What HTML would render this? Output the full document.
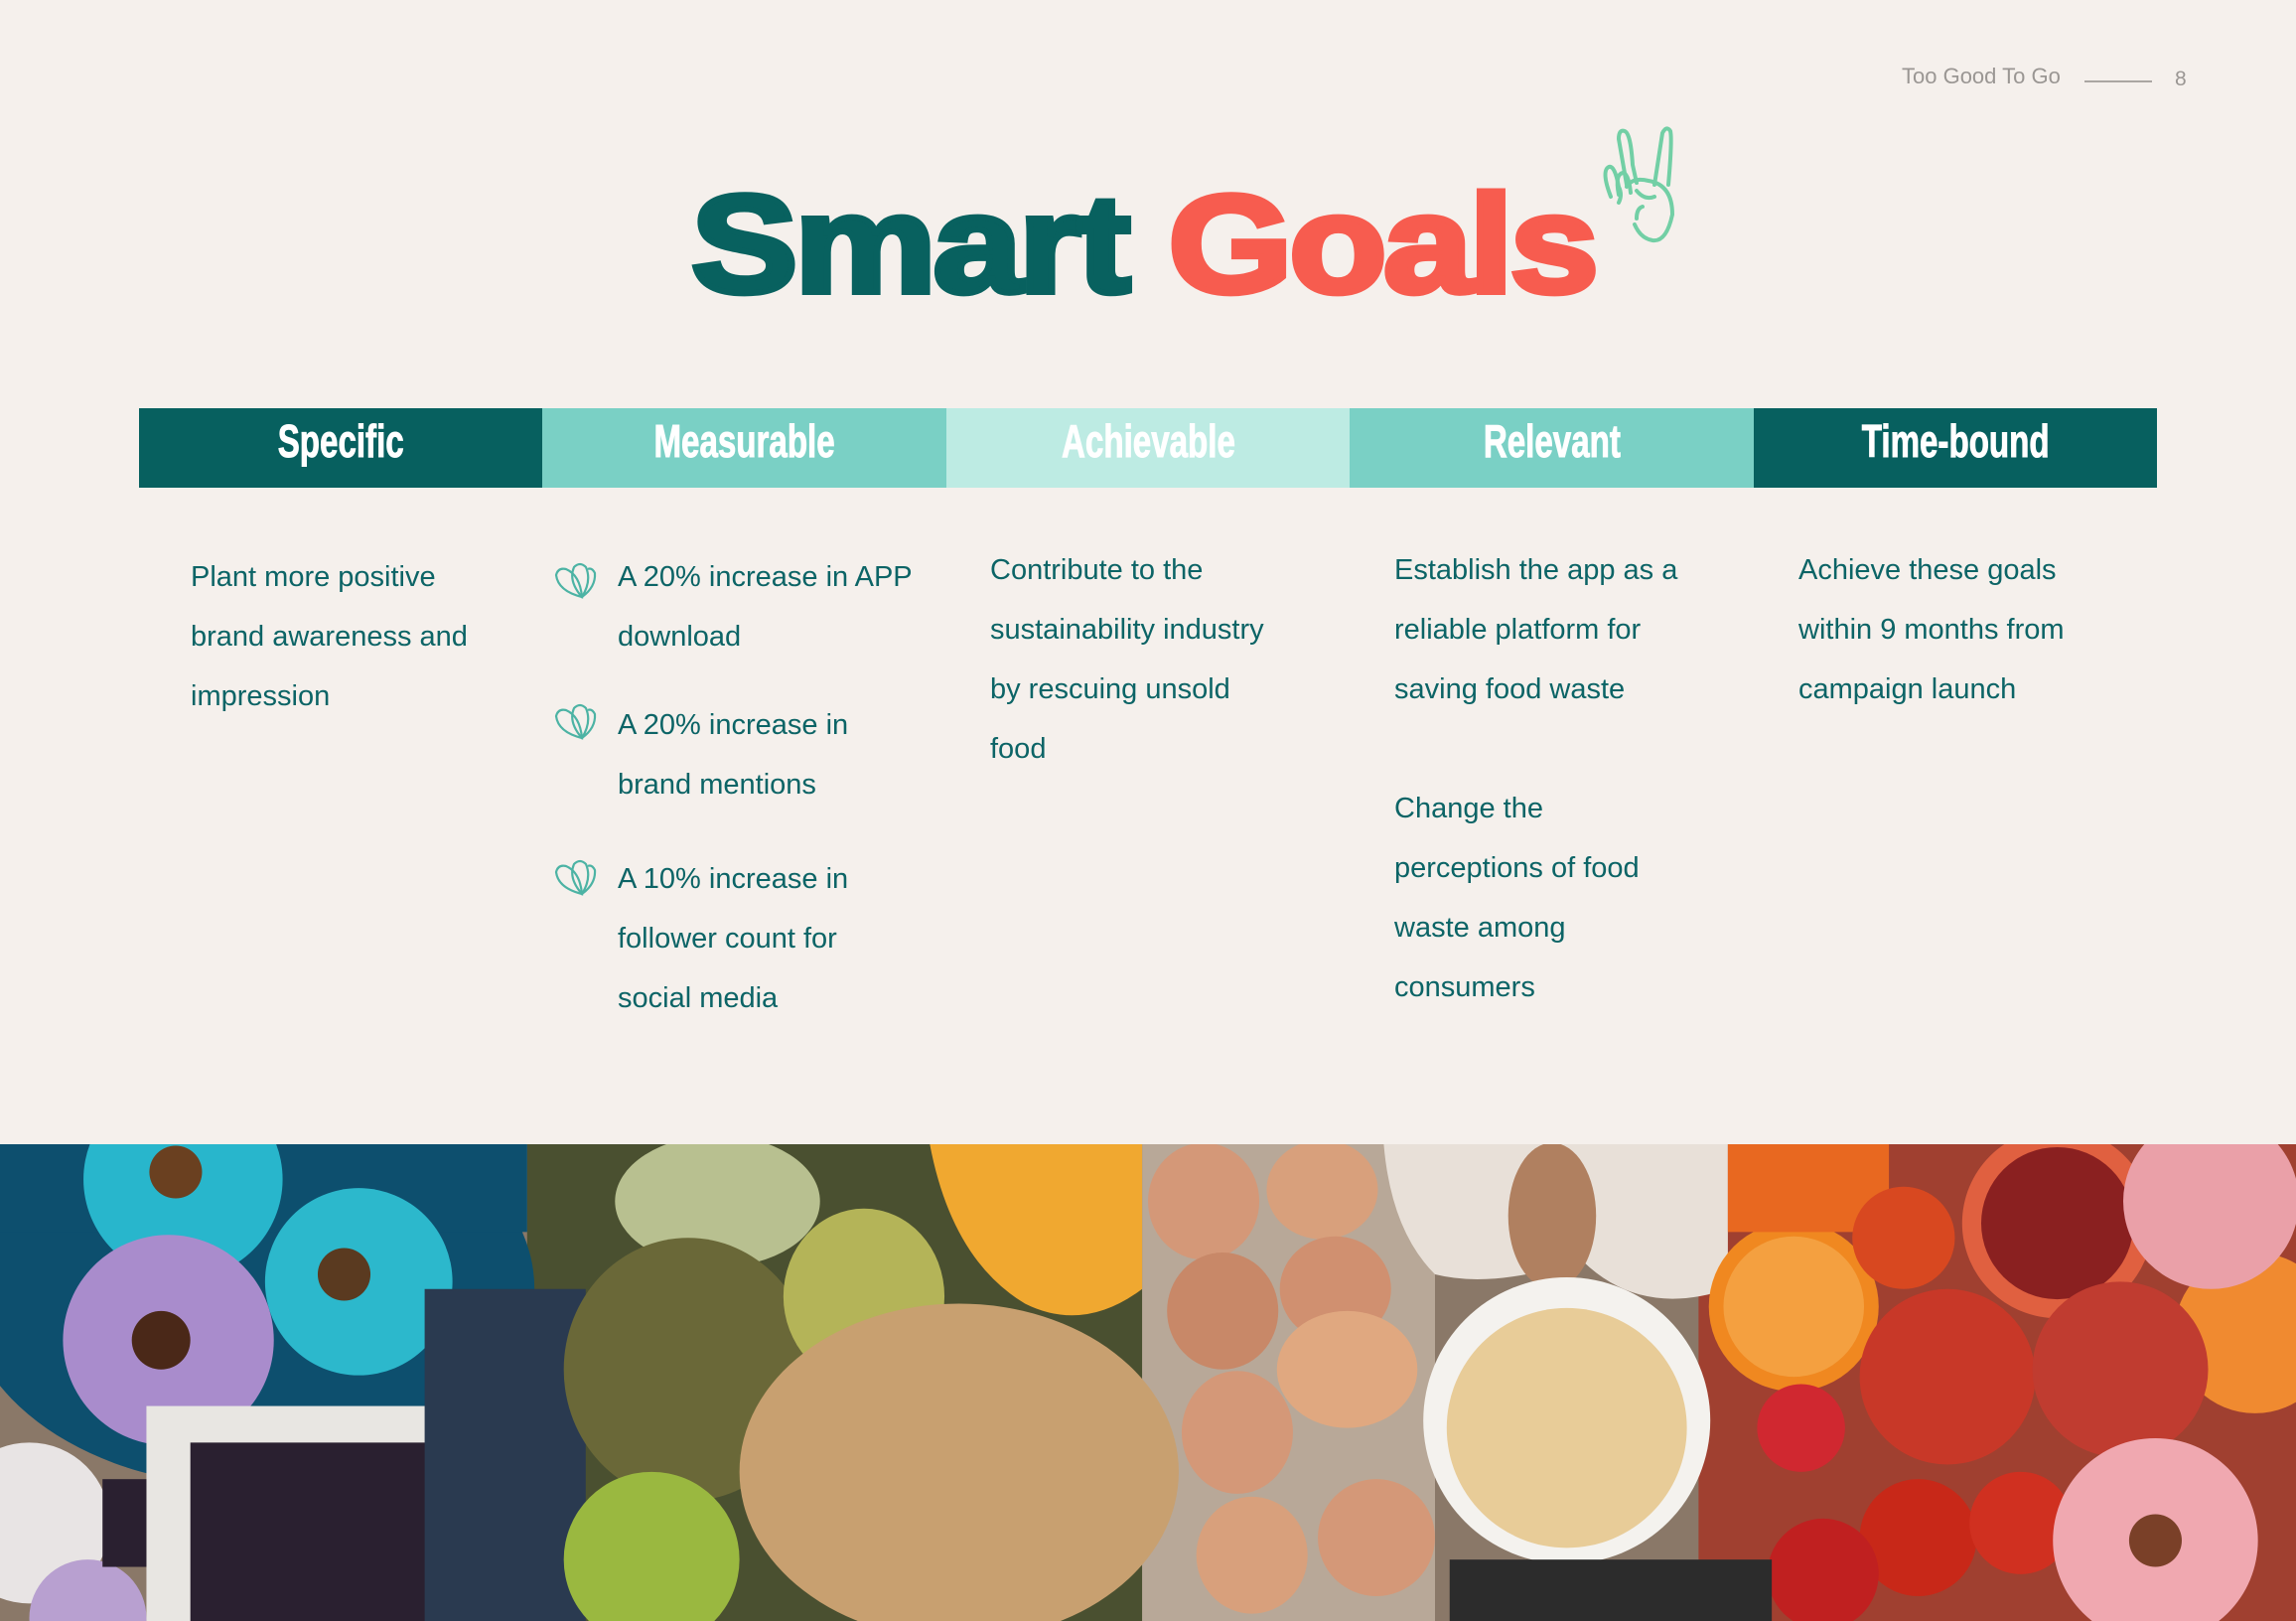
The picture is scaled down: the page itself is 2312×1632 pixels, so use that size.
<!DOCTYPE html>
<html><head><meta charset="utf-8"><style>
html,body{margin:0;padding:0}
body{width:2312px;height:1632px;background:#f5f0ec;position:relative;overflow:hidden;font-family:"Liberation Sans",sans-serif}
.hdr{position:absolute;top:64px;left:1915px;font-size:22px;color:#9a9693}
.hline{position:absolute;top:81px;left:2099px;width:68px;height:2px;background:#aaa6a2}
.pg{position:absolute;top:68px;left:2190px;font-size:21px;color:#9a9693}
.title{position:absolute;left:696px;top:176px;font-size:140px;font-weight:bold;letter-spacing:-3px;white-space:nowrap;line-height:1;-webkit-text-stroke:6px currentColor;transform:scale(1.15,1);transform-origin:0 0}
.bar{position:absolute;top:411px;left:140px;width:2032px;height:80px;display:flex}
.bar div{flex:1;display:flex;align-items:center;justify-content:center;color:#fff;font-weight:bold;font-size:46px;padding-bottom:14px;box-sizing:border-box}
.bar span{display:inline-block;transform:scaleX(0.72);-webkit-text-stroke:1px #fff}
.t{position:absolute;font-size:29px;color:#0c6466;line-height:60px;white-space:nowrap}
.ic{position:absolute;width:44px;height:40px}
</style></head><body>
<div class="hdr">Too Good To Go</div><div class="hline"></div><div class="pg">8</div>
<div class="title"><span style="color:#08615f">Smart</span> <span style="color:#f75c4f">Goals</span></div>
<svg style="position:absolute;left:1608px;top:126px" width="88" height="124" viewBox="0 0 88 124" fill="none" stroke="#72cfa5" stroke-width="4" stroke-linecap="round">
<path d="M30 60 L22 14 Q22 4 28 6 Q34 8 36 40 L40 58"/>
<path d="M58 60 L66 8 Q70 0 74 6 Q76 14 72 60"/>
<path d="M30 62 Q36 52 52 56 Q76 60 76 90 Q70 118 56 116 Q44 114 38 100"/>
<path d="M14 72 Q4 46 12 42 Q18 40 22 62 Q26 70 22 78"/>
<path d="M22 70 Q18 50 26 48 Q32 48 34 68"/>
<path d="M40 66 Q48 76 58 72 M46 82 Q40 84 40 94"/>
</svg>
<div class="bar">
<div style="background:#07605f"><span>Specific</span></div>
<div style="background:#7ad0c5"><span>Measurable</span></div>
<div style="background:#bdebe3"><span>Achievable</span></div>
<div style="background:#7ad0c5"><span>Relevant</span></div>
<div style="background:#07605f"><span>Time-bound</span></div>
</div>
<div class="t" style="left:192px;top:551px">Plant more positive<br>brand awareness and<br>impression</div>
<div class="t" style="left:622px;top:551px">A 20% increase in APP<br>download</div>
<div class="t" style="left:622px;top:700px">A 20% increase in<br>brand mentions</div>
<div class="t" style="left:622px;top:855px">A 10% increase in<br>follower count for<br>social media</div>
<div class="t" style="left:997px;top:544px">Contribute to the<br>sustainability industry<br>by rescuing unsold<br>food</div>
<div class="t" style="left:1404px;top:544px">Establish the app as a<br>reliable platform for<br>saving food waste</div>
<div class="t" style="left:1404px;top:784px">Change the<br>perceptions of food<br>waste among<br>consumers</div>
<div class="t" style="left:1811px;top:544px">Achieve these goals<br>within 9 months from<br>campaign launch</div>
<svg class="ic" style="left:558px;top:565px" viewBox="0 0 44 40" fill="none" stroke="#4cb3a4" stroke-width="2.2"><path d="M28 36 Q4 30 2 14 Q4 6 12 8 Q26 14 28 36Z"/><path d="M28 36 Q14 20 20 6 Q26 0 32 6 Q38 20 28 36Z"/><path d="M28 36 Q42 26 41 12 Q38 6 34 8"/></svg>
<svg class="ic" style="left:558px;top:707px" viewBox="0 0 44 40" fill="none" stroke="#4cb3a4" stroke-width="2.2"><path d="M28 36 Q4 30 2 14 Q4 6 12 8 Q26 14 28 36Z"/><path d="M28 36 Q14 20 20 6 Q26 0 32 6 Q38 20 28 36Z"/><path d="M28 36 Q42 26 41 12 Q38 6 34 8"/></svg>
<svg class="ic" style="left:558px;top:864px" viewBox="0 0 44 40" fill="none" stroke="#4cb3a4" stroke-width="2.2"><path d="M28 36 Q4 30 2 14 Q4 6 12 8 Q26 14 28 36Z"/><path d="M28 36 Q14 20 20 6 Q26 0 32 6 Q38 20 28 36Z"/><path d="M28 36 Q42 26 41 12 Q38 6 34 8"/></svg>
<svg style="position:absolute;left:0;top:1152px" width="2312" height="480" viewBox="0 781 1568 326" preserveAspectRatio="none">
<rect x="0" y="781" width="1568" height="326" fill="#8a7868"/>
<rect x="360" y="781" width="420" height="326" fill="#4a5030"/>
<rect x="780" y="781" width="200" height="326" fill="#b8a898"/>
<rect x="1160" y="781" width="408" height="326" fill="#a04030"/>
<ellipse cx="170" cy="880" rx="195" ry="135" fill="#0d4f6e"/>
<rect x="0" y="781" width="360" height="60" fill="#0d4f6e"/>
<circle cx="125" cy="805" r="68" fill="#28b6cc"/><circle cx="120" cy="800" r="18" fill="#6a4020"/>
<circle cx="245" cy="875" r="64" fill="#2cb8cc"/><circle cx="235" cy="870" r="18" fill="#5a3a20"/>
<circle cx="115" cy="915" r="72" fill="#a98ccc"/><circle cx="110" cy="915" r="20" fill="#4a2818"/>
<circle cx="20" cy="1040" r="55" fill="#e8e4e4"/><circle cx="60" cy="1105" r="40" fill="#b8a0d0"/>
<rect x="100" y="960" width="220" height="147" fill="#e8e6e2"/><rect x="130" y="985" width="170" height="122" fill="#2a2030"/>
<rect x="290" y="880" width="110" height="227" fill="#2a3a50"/><rect x="70" y="1010" width="30" height="60" fill="#2a2030"/>
<ellipse cx="490" cy="820" rx="70" ry="45" fill="#b8c090"/>
<ellipse cx="470" cy="935" rx="85" ry="90" fill="#6a6838"/>
<ellipse cx="590" cy="885" rx="55" ry="60" fill="#b4b458"/>
<circle cx="445" cy="1065" r="60" fill="#9ab840"/>
<path d="M635 781 H780 V880 Q740 910 700 890 Q650 860 635 781Z" fill="#f0a830"/>
<ellipse cx="655" cy="1005" rx="150" ry="115" fill="#c8a070"/>
<ellipse cx="822" cy="820" rx="38" ry="40" fill="#d49878"/><ellipse cx="903" cy="812" rx="38" ry="34" fill="#d8a07c"/>
<ellipse cx="835" cy="895" rx="38" ry="40" fill="#c88868"/><ellipse cx="912" cy="880" rx="38" ry="36" fill="#d09070"/>
<ellipse cx="920" cy="935" rx="48" ry="40" fill="#e0a880"/><ellipse cx="845" cy="978" rx="38" ry="42" fill="#d49878"/>
<ellipse cx="855" cy="1062" rx="38" ry="40" fill="#d8a07c"/><ellipse cx="940" cy="1050" rx="40" ry="40" fill="#d49878"/>
<path d="M945 781 H1180 V880 Q1120 900 1080 860 Q1020 880 980 870 Q950 840 945 781Z" fill="#e8e0d8"/>
<ellipse cx="1060" cy="830" rx="30" ry="50" fill="#b08060"/>
<circle cx="1070" cy="970" r="98" fill="#f4f2ee"/><circle cx="1070" cy="975" r="82" fill="#e8cc98"/>
<circle cx="1225" cy="892" r="58" fill="#f08820"/><circle cx="1225" cy="892" r="48" fill="#f4a040"/>
<circle cx="1405" cy="835" r="65" fill="#e06040"/><circle cx="1405" cy="835" r="52" fill="#8a2020"/>
<rect x="1180" y="781" width="110" height="60" fill="#e86820"/><circle cx="1300" cy="845" r="35" fill="#d84820"/>
<circle cx="1540" cy="910" r="55" fill="#f08a30"/>
<circle cx="1330" cy="940" r="60" fill="#c83828"/><circle cx="1448" cy="935" r="60" fill="#c03c30"/>
<circle cx="1230" cy="975" r="30" fill="#d02830"/>
<circle cx="1310" cy="1050" r="40" fill="#c82818"/><circle cx="1380" cy="1040" r="35" fill="#d03020"/>
<circle cx="1245" cy="1075" r="38" fill="#c02020"/>
<circle cx="1472" cy="1052" r="70" fill="#f0a8b0"/><circle cx="1472" cy="1052" r="18" fill="#7a4028"/>
<circle cx="1510" cy="820" r="60" fill="#eaa0a8"/>
<rect x="990" y="1065" width="220" height="42" fill="#2c2c2c"/>
</svg>
</body></html>
